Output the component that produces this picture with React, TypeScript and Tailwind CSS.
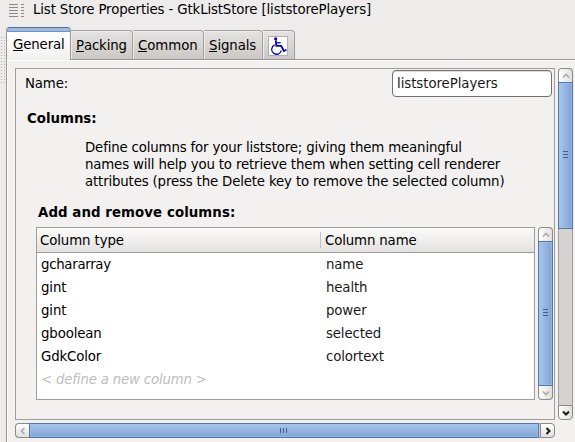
import React from "react";

const tabs = [
  { label: "Packing", width: "w-[62px]", text: "tracking-[-0.15px]" },
  { label: "Common", width: "w-[71px]", text: "tracking-[-0.05px]" },
  { label: "Signals", width: "w-[59px]", text: "tracking-[-0.1px]" },
];

const rows = [
  ["gchararray", "name"],
  ["gint", "health"],
  ["gint", "power"],
  ["gboolean", "selected"],
  ["GdkColor", "colortext"],
];

function Mnemonic({ text }: { text: string }) {
  return (
    <span className="flex whitespace-nowrap">
      <span className="h-[14px] border-b border-black leading-4">{text[0]}</span>
      <span className="leading-4">{text.slice(1)}</span>
    </span>
  );
}

const chevrons = {
  up: "M4 8.5 L7 5.5 L10 8.5",
  down: "M4 5.5 L7 8.5 L10 5.5",
  left: "M8.5 4 L5.5 7 L8.5 10",
  right: "M5.5 4 L8.5 7 L5.5 10",
};

function Arrow({ dir, active }: { dir: keyof typeof chevrons; active?: boolean }) {
  return (
    <svg width="14" height="14" viewBox="0 0 14 14" className="shrink-0">
      <path d={chevrons[dir]} fill="none" stroke={active ? "#1a1a1a" : "#aaa9a7"} strokeWidth={active ? 2 : 1.6} />
    </svg>
  );
}

function Grip({ vertical }: { vertical?: boolean }) {
  return (
    <span className={vertical ? "mb-[2px] flex flex-col gap-[2px]" : "mr-px flex gap-[2px]"}>
      {[0, 1, 2].map((i) => (
        <span key={i} className={vertical ? "h-px w-[5px] bg-[#3f618f]" : "h-[5px] w-px bg-[#3f618f]"} />
      ))}
    </span>
  );
}

const vThumb =
  "flex w-[15px] shrink-0 items-center justify-center border border-[#5577a8] bg-linear-to-r from-[#a9c6ec] to-[#7fa3d5] shadow-[inset_0_0_0_1px_rgba(160,195,240,0.55)]";

function App() {
  return (
    <div className="flex h-[442px] w-[575px] flex-col overflow-hidden bg-[#edeceb] font-['DejaVu_Sans',sans-serif] text-[13.333px] leading-4 tracking-[-0.14px] text-black">
      <div className="flex h-[27px] shrink-0 pt-[2px] pl-[9px]">
        <div className="mt-[2px] mr-[9px] flex gap-[3px]">
          {["w-[9px]", "w-[3px]"].map((w) => (
            <div key={w} className={"flex flex-col gap-[2px] " + w}>
              {[0, 1, 2, 3, 4].map((i) => (
                <span key={i} className="h-px w-full bg-[#8c8b89]" />
              ))}
            </div>
          ))}
        </div>
        <span className="whitespace-nowrap">List Store Properties - GtkListStore [liststorePlayers]</span>
      </div>

      <div className="flex flex-1">
        <div className="w-[6px] shrink-0 pt-[9px]">
          <div className="h-[47px] w-[5px] bg-[radial-gradient(#b0afad_0.7px,transparent_0.9px)] bg-[size:3px_3px]" />
        </div>
        <div className="flex flex-1 flex-col">
          <div className="flex h-[33px] shrink-0 items-end">
            <div className="h-[33px] w-[65px] shrink-0 overflow-hidden rounded-t-[4px] border-t border-r border-l border-t-[#54719b] border-r-[#999795] border-l-[#999795] bg-[#9abce8]">
              <div className="mt-[3px] h-[29px] border-t border-[#6f93c4] bg-linear-to-b from-white to-[#f2f1ef] pt-[5px] pl-[6px]">
                <Mnemonic text="General" />
              </div>
            </div>
            <div className="flex h-[30px] flex-1 items-start border-b border-[#999795]">
              {tabs.map((t) => (
                <div
                  key={t.label}
                  className={"h-[29px] shrink-0 rounded-tr-[4px] border-t border-r border-[#a3a19f] bg-linear-to-b from-[#e6e4e2] to-[#cbc8c5] pt-[7px] pl-[5px] shadow-[inset_1px_1px_0_#eeedeb] " + t.width + " " + t.text}
                >
                  <Mnemonic text={t.label} />
                </div>
              ))}
              <div className="h-[29px] w-[32px] shrink-0 rounded-tr-[4px] border-t border-r border-[#a3a19f] bg-linear-to-b from-[#e6e4e2] to-[#cbc8c5] pt-[5px] pl-[5px] shadow-[inset_1px_1px_0_#eeedeb]">
                <svg width="20" height="20" viewBox="0 0 20 20">
                  <rect x="0.5" y="0.5" width="19" height="19" fill="#fff" stroke="#b2b0ae" />
                  <circle cx="7.7" cy="2.8" r="1.6" fill="#0000c8" />
                  <path d="M7.8 4.3 L8.3 9.8 H13.2 L15.9 15 L18.4 13.8" fill="none" stroke="#0000c8" strokeWidth="1.8" />
                  <path d="M8 6.8 H12.7" stroke="#0000c8" strokeWidth="1.3" />
                  <path d="M6.7 8.8 A4.9 4.9 0 1 0 13.3 14.6" fill="none" stroke="#0000c8" strokeWidth="1.3" />
                </svg>
              </div>
            </div>
          </div>

          <div className="flex flex-1 flex-col border-l border-[#999795] bg-[#f2f1ef] pt-[8px] pl-[8px] shadow-[inset_1px_0_0_#fff,inset_0_1px_0_#fff]">
            <div className="flex h-[352px] shrink-0">
              <div className="flex h-[352px] w-[540px] shrink-0 flex-col border border-[#a09e9b]">
                <div className="flex h-[29px] shrink-0 justify-between pt-px pr-[2px] pl-[9px]">
                  <span className="pt-[6px]">Name:</span>
                  <div className="h-[27px] w-[160px] rounded-[4px] border border-[#74706b] bg-white pt-[5px] pl-[4px] tracking-[-0.06px] text-[#1a1a1a] shadow-[inset_0_1px_0_#dddcda]">
                    liststorePlayers
                  </div>
                </div>
                <div className="mt-[13px] pl-[11px] font-bold tracking-[0]">Columns:</div>
                <div className="mt-[12px] pl-[69px] leading-[17px] tracking-[-0.16px] whitespace-nowrap">
                  Define columns for your liststore; giving them meaningful
                  <br />
                  names will help you to retrieve them when setting cell renderer
                  <br />
                  attributes (press the Delete key to remove the selected column)
                </div>
                <div className="mt-[15px] pl-[22px] font-bold tracking-[0.08px] whitespace-nowrap">Add and remove columns:</div>
                <div className="mt-[6px] flex gap-[3px] pl-[20px]">
                  <div className="h-[173px] w-[499px] shrink-0 border border-[#a09e9b] bg-white">
                    <div className="flex h-[25px] border-b border-[#a09e9b] bg-linear-to-b from-[#fbfbfa] to-[#e3e2e0] leading-[25px]">
                      <span className="w-[283px] pl-[3px] tracking-[-0.1px]">Column type</span>
                      <span className="my-[4px] w-px bg-[#c5c3c0]" />
                      <span className="pl-[4px]">Column name</span>
                    </div>
                    {rows.map(([type, name], i) => (
                      <div key={i} className="flex h-[23px] leading-[23px]">
                        <span className={"w-[285px] pl-[4px] " + (i === 0 ? "tracking-[-0.3px]" : "")}>{type}</span>
                        <span className="pl-[4px] text-[#1a1a1a]">{name}</span>
                      </div>
                    ))}
                    <div className="h-[23px] pl-[4px] leading-[23px] tracking-[-0.18px] text-[#bebebe] italic">&lt; define a new column &gt;</div>
                  </div>
                  <div className="flex h-[173px] w-[15px] shrink-0 flex-col">
                    <div className="flex h-[14px] shrink-0 items-center justify-center rounded-t-[4px] border border-b-0 border-[#8c8a87] bg-linear-to-r from-white to-[#e0dfdd]">
                      <Arrow dir="up" />
                    </div>
                    <div className={vThumb + " h-[145px]"}>
                      <Grip vertical />
                    </div>
                    <div className="flex h-[14px] shrink-0 items-center justify-center rounded-b-[4px] border border-t-0 border-[#8c8a87] bg-linear-to-r from-white to-[#e0dfdd]">
                      <Arrow dir="down" />
                    </div>
                  </div>
                </div>
              </div>
              <div className="ml-[3px] flex w-[15px] shrink-0 flex-col">
                <div className="flex h-[14px] shrink-0 items-center justify-center rounded-t-[4px] border border-b-0 border-[#8c8a87] bg-linear-to-r from-white to-[#e0dfdd]">
                  <Arrow dir="up" />
                </div>
                <div className={vThumb + " h-[147px]"}>
                  <Grip vertical />
                </div>
                <div className="flex-1 border-x border-[#a09e9b] bg-[#d5d3d1]" />
                <div className="flex h-[15px] shrink-0 items-center justify-center rounded-b-[4px] border border-[#8c8a87] bg-linear-to-r from-white to-[#e0dfdd]">
                  <Arrow dir="down" active />
                </div>
              </div>
            </div>
            <div className="mt-[3px] flex h-[15px] w-[540px] shrink-0">
              <div className="flex w-[14px] shrink-0 items-center justify-center rounded-l-[4px] border border-r-0 border-[#8c8a87] bg-linear-to-b from-white to-[#e0dfdd]">
                <Arrow dir="left" />
              </div>
              <div className="flex w-[510px] shrink-0 items-center justify-center border border-[#5577a8] bg-linear-to-b from-[#a9c6ec] to-[#7fa3d5] shadow-[inset_0_0_0_1px_rgba(160,195,240,0.55)]">
                <Grip />
              </div>
              <div className="w-px shrink-0 border-y border-[#a09e9b] bg-[#d5d3d1]" />
              <div className="flex w-[15px] shrink-0 items-center justify-center rounded-r-[4px] border border-[#8c8a87] bg-linear-to-b from-white to-[#e0dfdd]">
                <Arrow dir="right" active />
              </div>
            </div>
          </div>
        </div>
      </div>
    </div>
  );
}

export default App;
